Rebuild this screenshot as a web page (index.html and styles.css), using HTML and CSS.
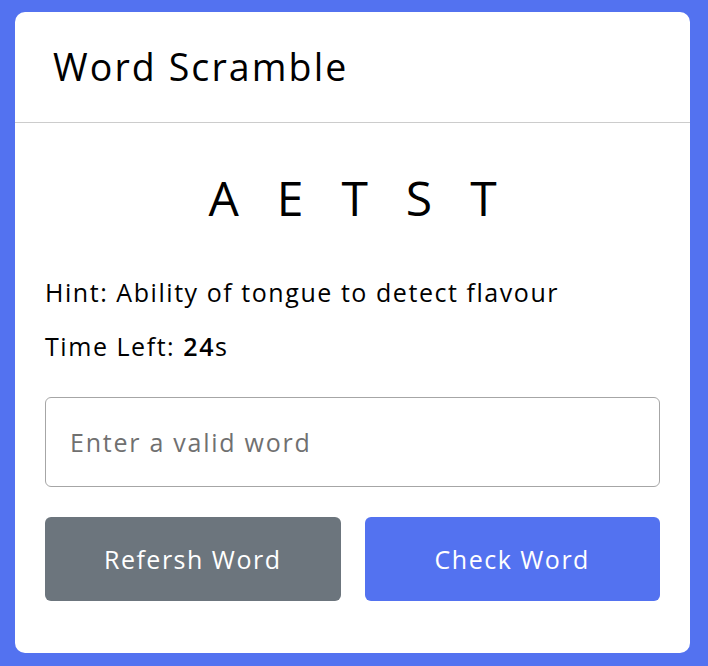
FILE: index.html
```html
<!DOCTYPE html>
<html lang="en">
<head>
<meta charset="utf-8">
<title>Word Scramble</title>
<link rel="stylesheet" href="styles.css">
</head>
<body>
<div class="card">
  <header class="card-header">
    <h2 class="title">Word Scramble</h2>
  </header>
  <div class="content">
    <p class="word">AETST</p>
    <div class="details">
      <p class="hint">Hint: <span>Ability of tongue to detect flavour</span></p>
      <p class="time">Time Left: <b>24</b>s</p>
    </div>
    <input class="guess" type="text" placeholder="Enter a valid word" spellcheck="false">
    <div class="buttons">
      <button class="btn refresh">Refersh Word</button>
      <button class="btn check">Check Word</button>
    </div>
  </div>
</div>
</body>
</html>
```
FILE: styles.css
```css
* {
  box-sizing: border-box;
}
html, body {
  margin: 0;
  padding: 0;
}
body {
  background: #5372F0;
  font-family: "Open Sans", "Noto Sans", sans-serif;
  letter-spacing: 0.06em;
  color: #000;
  min-height: 666px;
  padding: 12px 0 0 15px;
}
.card {
  width: 675px;
  height: 641px;
  background: #fff;
  border-radius: 10px;
  display: flex;
  flex-direction: column;
}
.card-header {
  height: 111px;
  border-bottom: 1px solid #ccc;
  display: flex;
  align-items: center;
  padding: 0 38px;
}
.title {
  margin: 0;
  font-size: 37.5px;
  font-weight: 500;
  line-height: 40px;
  letter-spacing: 2.1px;
}
.content {
  padding: 45px 30px 0 30px;
  display: flex;
  flex-direction: column;
}
.word {
  margin: 0;
  text-align: center;
  font-size: 48px;
  line-height: 60px;
  font-weight: 500;
  letter-spacing: 38px;
  margin-right: -38px;
  text-transform: uppercase;
}
.details {
  margin-top: 46px;
}
.details p {
  margin: 0;
  font-size: 25px;
  line-height: 36px;
  letter-spacing: 0.062em;
}
.details .time {
  margin-top: 18px;
}
.details b {
  font-weight: 600;
}
.guess {
  margin-top: 33px;
  width: 100%;
  height: 90px;
  border: 1px solid #a6a6a6;
  border-radius: 6px;
  padding: 0 24px;
  font-family: inherit;
  font-size: 25px;
  letter-spacing: 0.07em;
  outline: none;
}
.guess::placeholder {
  color: #707070;
}
.buttons {
  margin-top: 30px;
  display: flex;
  gap: 24px;
}
.btn {
  flex: 1;
  height: 84px;
  border: none;
  border-radius: 6px;
  color: #fff;
  font-family: inherit;
  font-size: 25px;
  letter-spacing: 0.06em;
  cursor: pointer;
}
.refresh {
  background: #6C757D;
}
.check {
  background: #5372F0;
}
```
